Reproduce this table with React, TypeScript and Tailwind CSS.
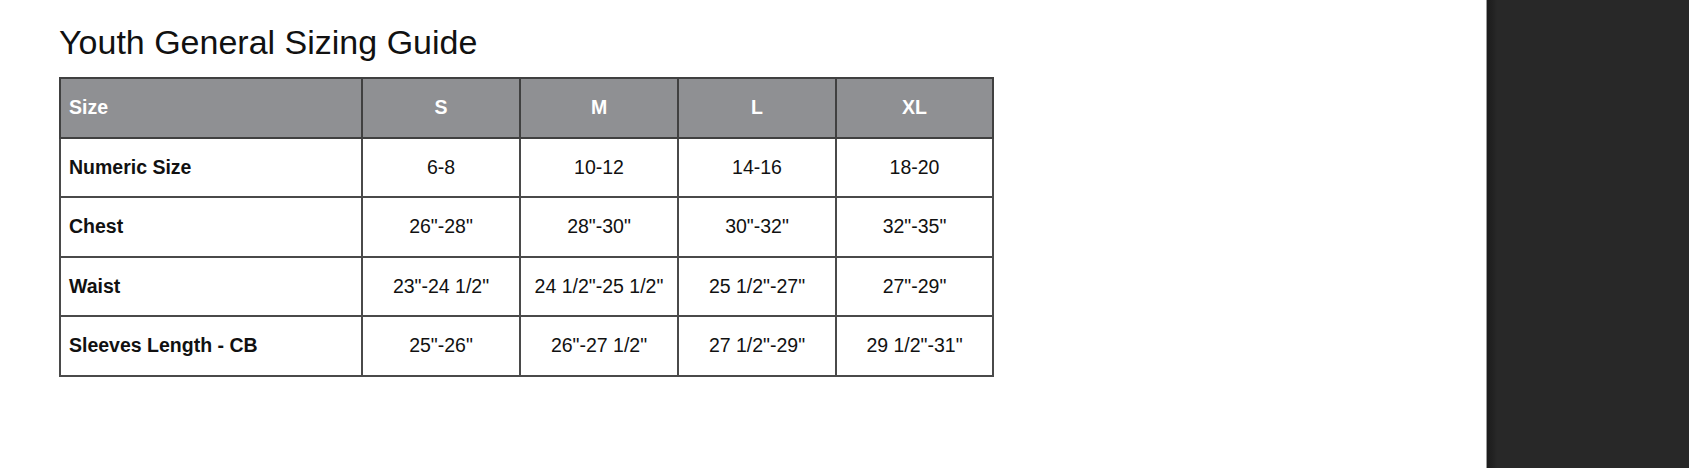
const sizes = ['S', 'M', 'L', 'XL']

const rows: { label: string; values: string[] }[] = [
  { label: 'Numeric Size', values: ['6-8', '10-12', '14-16', '18-20'] },
  { label: 'Chest', values: ['26"-28"', '28"-30"', '30"-32"', '32"-35"'] },
  { label: 'Waist', values: ['23"-24 1/2"', '24 1/2"-25 1/2"', '25 1/2"-27"', '27"-29"'] },
  { label: 'Sleeves Length - CB', values: ['25"-26"', '26"-27 1/2"', '27 1/2"-29"', '29 1/2"-31"'] },
]

export default function App() {
  return (
    <div className="flex h-[468px] w-full bg-white font-['Liberation_Sans',Arial,sans-serif] text-[#111]">
      <main className="flex-1 pl-[59px] pt-[26px]">
        <h1 className="mb-[18px] text-[34px] leading-[33px] font-normal">Youth General Sizing Guide</h1>

        <table className="w-[933px] table-fixed border-collapse border-2 border-[#404040] text-[19.5px]">
          <colgroup>
            <col className="w-[302px]" />
            <col className="w-[158px]" />
            <col className="w-[158px]" />
            <col className="w-[158px]" />
            <col className="w-[157px]" />
          </colgroup>
          <thead>
            <tr className="h-[59.5px] bg-[#8f9093] text-white">
              <th className="border-2 border-[#404040] pl-[8px] text-left font-bold">Size</th>
              {sizes.map((s) => (
                <th key={s} className="border-2 border-[#404040] text-center font-bold">{s}</th>
              ))}
            </tr>
          </thead>
          <tbody>
            {rows.map((row) => (
              <tr key={row.label} className="h-[59.5px]">
                <td className="border-2 border-[#4a4a4a] pl-[8px] font-bold">{row.label}</td>
                {row.values.map((v, i) => (
                  <td key={i} className="border-2 border-[#4a4a4a] text-center">{v}</td>
                ))}
              </tr>
            ))}
          </tbody>
        </table>
      </main>

      {/* side panel */}
      <aside className="w-[203px] border-l border-[#9a9a9a] bg-[linear-gradient(to_right,#1c1c1c_0px,#222_6px,#282828_10px)]" />
    </div>
  )
}
